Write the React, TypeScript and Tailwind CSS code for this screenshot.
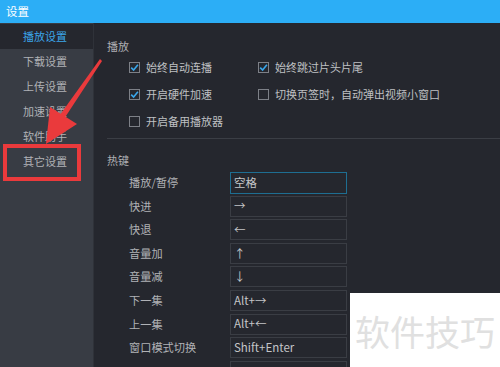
import React from 'react';

const font = { fontFamily: '"Noto Sans CJK SC", "Microsoft YaHei", sans-serif' };

const menu = ['播放设置', '下载设置', '上传设置', '加速设置', '软件助手', '其它设置'];

const hotkeys: [string, string][] = [
  ['播放/暂停', '空格'],
  ['快进', '→'],
  ['快退', '←'],
  ['音量加', '↑'],
  ['音量减', '↓'],
  ['下一集', 'Alt+→'],
  ['上一集', 'Alt+←'],
  ['窗口模式切换', 'Shift+Enter'],
  ['', ''],
];

const CheckBox: React.FC<{ checked?: boolean; label: string }> = ({ checked, label }) => (
  <div className="flex items-center gap-[6px] w-[129px] whitespace-nowrap">
    <div className="w-[11px] h-[11px] border border-[#7d8087] flex items-center justify-center shrink-0">
      {checked && (
        <svg width="9" height="9" viewBox="0 0 9 9">
          <path d="M1.2 4.6 L3.6 7 L7.9 1.8" fill="none" stroke="#39a6ea" strokeWidth="1.6" />
        </svg>
      )}
    </div>
    <span className="text-[11px] text-[#bfc0c3]">{label}</span>
  </div>
);

export default function App() {
  return (
    <div className="relative w-[500px] h-[367px] overflow-hidden bg-[#25272e] flex flex-col" style={font}>
      <div className="h-[23px] bg-[#2caef6] flex items-center pl-[6px] text-[11.5px] text-white shrink-0">设置</div>
      <div className="flex flex-1 min-h-0">
        <div className="w-[93px] bg-[#383c44] flex flex-col pt-[1px] shrink-0">
          {menu.map((m, i) => (
            <div
              key={m}
              className={
                i === 0
                  ? 'h-[25px] flex items-center pl-[23px] text-[11px] text-[#3ba6ea] bg-[#25272e]'
                  : 'h-[25px] flex items-center pl-[23px] text-[11px] text-[#b0b2b6]'
              }
            >
              {m}
            </div>
          ))}
        </div>
        <div className="flex-1 border-l border-[#2f3239] pl-[13px] flex flex-col">
          <div className="mt-[15px] h-[16px] flex items-center text-[11px] text-[#aeafb3]">播放</div>
          <div className="pl-[22px]">
            <div className="h-[27px] flex items-center">
              <CheckBox checked label="始终自动连播" />
              <CheckBox checked label="始终跳过片头片尾" />
            </div>
            <div className="h-[27px] flex items-center">
              <CheckBox checked label="开启硬件加速" />
              <CheckBox label="切换页签时，自动弹出视频小窗口" />
            </div>
            <div className="h-[27px] flex items-center">
              <CheckBox label="开启备用播放器" />
            </div>
          </div>
          <div className="mt-[3px] border-t border-[#3b3e45]" />
          <div className="mt-[13px] h-[16px] flex items-center text-[11px] text-[#aeafb3]">热键</div>
          <div className="mt-[4px] pl-[22px] flex flex-col gap-[2.6px]">
            {hotkeys.map(([k, v], i) => (
              <div key={i} className="flex items-center h-[21px] shrink-0">
                <span className="w-[101px] text-[11.2px] text-[#b0b2b6]">{k}</span>
                <div
                  className={
                    i === 0
                      ? 'w-[117px] h-[22px] border border-[#1e6e92] flex items-center pl-[3px] text-[11.5px] text-[#c4c5c8]'
                      : 'w-[117px] h-[21px] border border-[#3a3d44] flex items-center pl-[3px] text-[11.5px] text-[#c4c5c8]'
                  }
                  style={{ fontFamily: '"Noto Sans CJK SC", "Liberation Sans", sans-serif' }}
                >
                  {v}
                </div>
              </div>
            ))}
          </div>
        </div>
      </div>

      {/* red highlight box */}
      <div className="absolute left-[3px] top-[144px] w-[78px] h-[37px] border-[4px] border-[#ea3a3c]" />

      {/* red arrow */}
      <svg className="absolute left-0 top-0 pointer-events-none" width="500" height="367">
        <polygon points="100,59 102,61 62,122 57,119" fill="#ea3a3c" />
        <polygon points="46,144 50,107 77,124" fill="#ea3a3c" />
      </svg>

      {/* watermark */}
      <div className="absolute left-[350px] top-[293px] w-[150px] h-[74px] bg-white flex items-center pl-[5px]">
        <span className="text-[35px] leading-none text-[#e0e0e0] whitespace-nowrap">软件技巧</span>
      </div>
    </div>
  );
}
